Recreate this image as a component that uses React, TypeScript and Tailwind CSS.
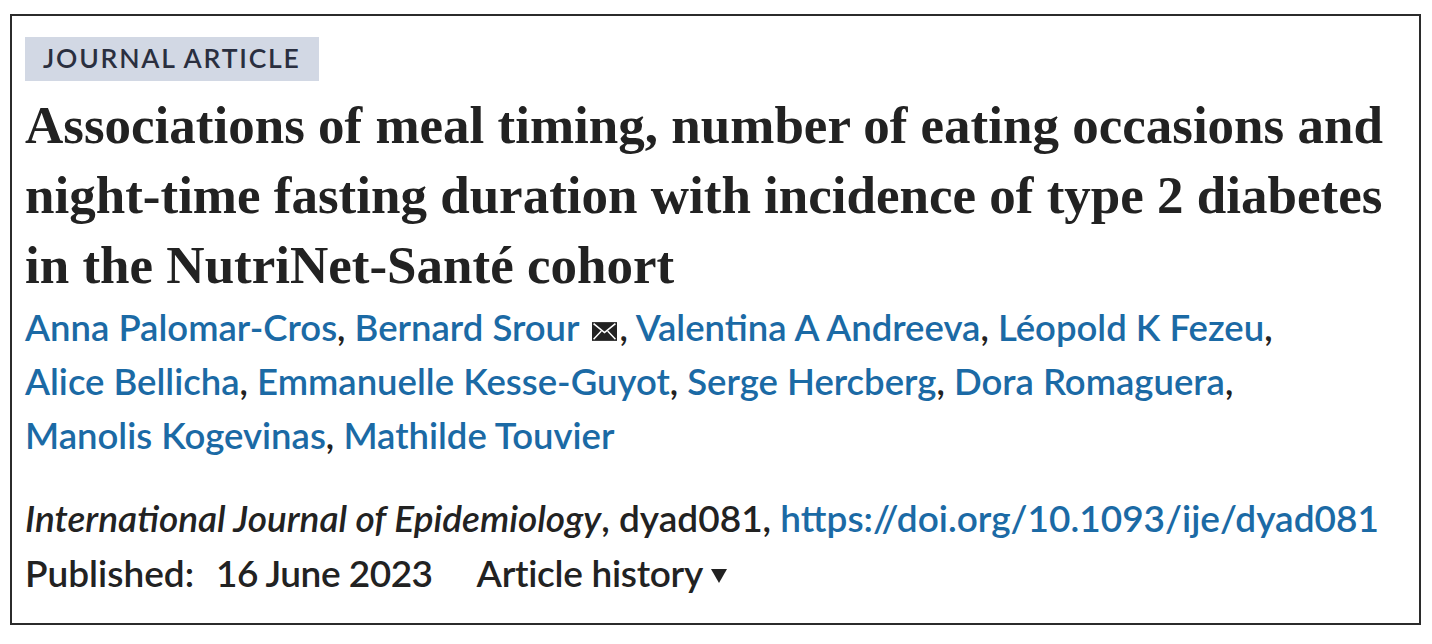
const authors = [
  ["Anna Palomar-Cros", "Bernard Srour", "Valentina A Andreeva", "Léopold K Fezeu"],
  ["Alice Bellicha", "Emmanuelle Kesse-Guyot", "Serge Hercberg", "Dora Romaguera"],
  ["Manolis Kogevinas", "Mathilde Touvier"],
];

function MailIcon() {
  return (
    <svg viewBox="0 0 24 18" className="inline-block w-[25px] h-[19px] ml-[12px] mr-[3px] align-[0px]">
      <rect x="0" y="0" width="24" height="18" fill="#222" />
      <path d="M1.5 1.5 L12 10 L22.5 1.5" stroke="#fff" strokeWidth="1.6" fill="none" />
      <path d="M1.5 16.5 L9 8.5 M22.5 16.5 L15 8.5" stroke="#fff" strokeWidth="1.4" fill="none" />
    </svg>
  );
}

export default function App() {
  return (
    <div className="w-[1432px] h-[644px] bg-white overflow-hidden pt-[14px] pl-[10px]">
      <div className="w-[1411px] h-[611px] border-2 border-[#2b2b2b] pl-[13px] pt-[21px]">
        <div className="inline-flex items-center h-[44px] px-[18px] bg-[#d2d8e4] text-[#2a2f3f] font-['Lato',sans-serif] font-semibold text-[26.5px] tracking-[1.8px]">
          JOURNAL ARTICLE
        </div>

        <h1 className="mt-[9px] font-['Liberation_Serif',serif] font-bold text-[53px] leading-[70px] text-[#222]">
          Associations of meal timing, number of eating occasions and
          <br />
          night-time fasting duration with incidence of type 2 diabetes
          <br />
          in the NutriNet-Santé cohort
        </h1>

        <div className="font-['Lato',sans-serif] font-semibold text-[36.5px] leading-[54px] text-[#222]">
          {authors.map((line, li) => (
            <div key={li} className="whitespace-nowrap">
              {line.map((name, i) => (
                <span key={name}>
                  <span className="text-[#1b6aa5]">{name}</span>
                  {name === "Bernard Srour" && <MailIcon />}
                  {(i < line.length - 1 || li < authors.length - 1) && ", "}
                </span>
              ))}
            </div>
          ))}
        </div>

        <div className="mt-[28px] font-['Lato',sans-serif] font-semibold text-[37px] leading-[55px] text-[#222]">
          <div className="whitespace-nowrap">
            <span className="italic">International Journal of Epidemiology</span>, dyad081,{" "}
            <span className="text-[#1b6aa5]">https://doi.org/10.1093/ije/dyad081</span>
          </div>
          <div className="flex items-center">
            <span>Published:</span>
            <span className="ml-[22px] tracking-[-0.5px]">16 June 2023</span>
            <span className="ml-[44px] tracking-[-0.3px]">Article history</span>
            <svg viewBox="0 0 16 14" className="ml-[8px] mt-[6px] w-[16px] h-[14px]">
              <path d="M0 0 H16 L8 14 Z" fill="#222" />
            </svg>
          </div>
        </div>
      </div>
    </div>
  );
}
